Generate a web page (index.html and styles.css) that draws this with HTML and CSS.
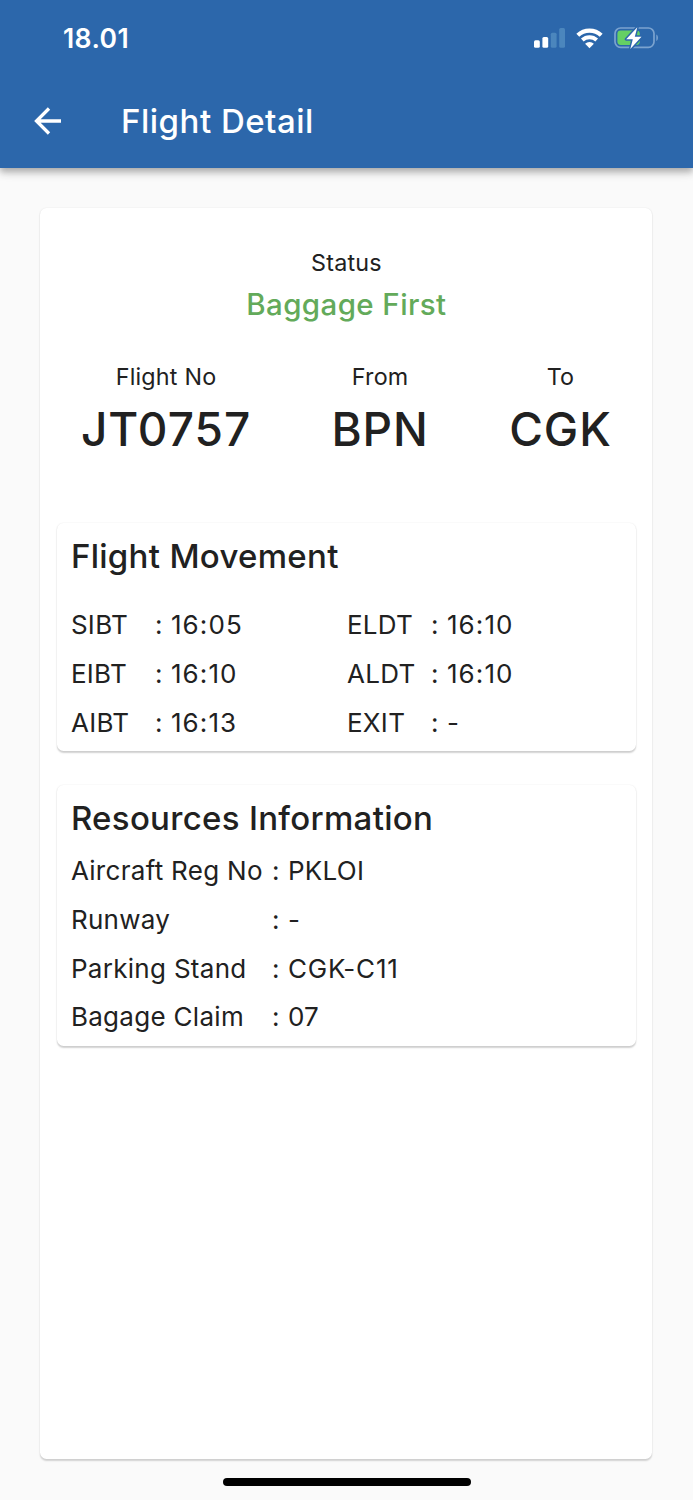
FILE: index.html
```html
<!DOCTYPE html>
<html lang="en">

<head>
    <meta charset="UTF-8">
    <meta name="viewport" content="width=device-width, initial-scale=1.0">
    <title>Flight Detail</title>
    <link rel="stylesheet" href="styles.css">
</head>

<body>
    <header>
        <div class="status-bar">
            <span class="clock">18.01</span>
            <div class="status-icons">
                <svg class="signal" width="31" height="20" viewBox="0 0 31 20" fill="#fff">
                    <rect x="0" y="12.2" width="5.8" height="7.6" rx="1.5" />
                    <rect x="8.4" y="9" width="5.8" height="10.8" rx="1.5" />
                    <rect x="16.8" y="4.7" width="5.8" height="15.1" rx="1.5" fill="#4b86bd" />
                    <rect x="25.2" y="0" width="5.8" height="19.8" rx="1.5" fill="#4b86bd" />
                </svg>
                <svg class="wifi" width="27" height="21" viewBox="0 0 27 21" fill="none" stroke="#fff">
                    <path d="M1.8 7.2a17 17 0 0 1 23.4 0" stroke-width="4.2" />
                    <path d="M6.3 12a10.6 10.6 0 0 1 14.4 0" stroke-width="3.9" />
                    <path d="M13.5 20.2l-4.4-4.4a6.3 6.3 0 0 1 8.8 0z" fill="#fff" stroke="none" />
                </svg>
                <svg class="battery" width="46" height="24" viewBox="0 0 46 24">
                    <rect x="1" y="2" width="39" height="19.4" rx="5.6" fill="none" stroke="#7ba3cf" stroke-width="1.7" />
                    <path d="M42.3 8.4c2.2.8 2.2 5.8 0 6.6z" fill="#7ba3cf" />
                    <rect x="3.4" y="4.4" width="22.4" height="14.6" rx="3.4" fill="#65d064" />
                    <path d="M23.3 1.2L12.2 13.2h6.6l-2.5 9.8 11.2-12.3h-6.7z" fill="#fff" stroke="#2c67ab" stroke-width="3" stroke-linejoin="round" paint-order="stroke" />
                </svg>
            </div>
        </div>
        <div class="app-bar">
            <svg class="back" width="28" height="28" viewBox="0 0 28 28" fill="none" stroke="#fff" stroke-width="3.3">
                <path d="M27 14H3M15 1.5L2.5 14 15 26.5" />
            </svg>
            <h1>Flight Detail</h1>
        </div>
    </header>

    <main class="card">
        <div class="status">
            <p class="label">Status</p>
            <p class="status-value">Baggage First</p>
        </div>

        <div class="route">
            <div>
                <p class="label">Flight No</p>
                <p class="code">JT0757</p>
            </div>
            <div>
                <p class="label">From</p>
                <p class="code">BPN</p>
            </div>
            <div>
                <p class="label">To</p>
                <p class="code">CGK</p>
            </div>
        </div>

        <section class="panel movement">
            <h2>Flight Movement</h2>
            <div class="rows">
                <span>SIBT</span><span>:</span><span class="time">16:05</span>
                <span>ELDT</span><span>:</span><span class="time">16:10</span>
                <span>EIBT</span><span>:</span><span class="time">16:10</span>
                <span>ALDT</span><span>:</span><span class="time">16:10</span>
                <span>AIBT</span><span>:</span><span class="time">16:13</span>
                <span>EXIT</span><span>:</span><span class="time">-</span>
            </div>
        </section>

        <section class="panel resources">
            <h2>Resources Information</h2>
            <div class="rows">
                <span>Aircraft Reg No</span><span>:</span><span>PKLOI</span>
                <span>Runway</span><span>:</span><span>-</span>
                <span>Parking Stand</span><span>:</span><span class="stand">CGK-C11</span>
                <span>Bagage Claim</span><span>:</span><span>07</span>
            </div>
        </section>
    </main>

    <div class="home-indicator"></div>
</body>

</html>
```

FILE: styles.css
```css
* {
    box-sizing: border-box;
}

body {
    background-color: #fafafa;
    color: #212121;
    font-family: Inter, "Liberation Sans", sans-serif;
    margin: 0;
    height: 1500px;
    display: flex;
    flex-direction: column;
}

h1,
h2,
p {
    margin: 0;
    font-weight: 500;
    white-space: nowrap;
}

header {
    background-color: #2c67ab;
    color: #fff;
    height: 167.5px;
    flex: none;
    box-shadow: 0 3px 6px rgba(0, 0, 0, 0.2), 0 6px 8px rgba(0, 0, 0, 0.12), 0 1px 14px rgba(0, 0, 0, 0.07);
}

.status-bar {
    display: flex;
    justify-content: space-between;
    align-items: center;
    height: 76px;
    padding: 0 33.5px 0 63px;
}

.clock {
    font-size: 26.5px;
    font-weight: 600;
    letter-spacing: 0.4px;
}

.status-icons {
    display: flex;
    align-items: center;
}

.wifi {
    margin: 0 11px 0 11px;
}

.app-bar {
    display: flex;
    align-items: center;
    height: 89px;
    padding-left: 34px;
    gap: 59px;
}

h1 {
    font-size: 33px;
    letter-spacing: 0.5px;
}

.card {
    background-color: #fff;
    border-radius: 6.5px;
    box-shadow: 0 1.6px 1.6px rgba(0, 0, 0, 0.16), 0 0 2px rgba(0, 0, 0, 0.07);
    width: 612px;
    height: 1251px;
    flex: none;
    margin: 40.5px 0 0 40.4px;
    padding: 34.8px 16.5px 0;
}

.status {
    text-align: center;
}

.label {
    font-size: 23.3px;
    font-weight: 400;
    line-height: 40px;
    letter-spacing: 0.2px;
}

.status-value {
    color: #63aa5a;
    font-size: 29.5px;
    line-height: 42px;
    letter-spacing: 0.4px;
}

.route {
    display: flex;
    justify-content: space-between;
    text-align: center;
    margin-top: 32px;
    padding: 0 24px;
}

.code {
    font-size: 46px;
    font-weight: 450;
    line-height: 64px;
    letter-spacing: 1px;
}

.panel {
    border-radius: 6.5px;
    box-shadow: 0 1.6px 1.6px rgba(0, 0, 0, 0.18), 0 0 2px rgba(0, 0, 0, 0.07);
    padding: 9px 14px 0;
}

.movement {
    height: 228.5px;
    margin-top: 62.2px;
}

.resources {
    height: 261px;
    margin-top: 33.4px;
}

h2 {
    font-size: 33px;
    line-height: 48px;
    letter-spacing: 0.3px;
}

.rows {
    display: grid;
    font-size: 26px;
    line-height: 48.6px;
    letter-spacing: 0.3px;
    white-space: nowrap;
}

.movement .rows {
    grid-template-columns: 84px 16px 176px 84px 16px 1fr;
    margin-top: 21.5px;
}

.resources .rows {
    grid-template-columns: 201px 16px 1fr;
    margin-top: 5.5px;
}

.time {
    letter-spacing: 1.1px;
}

.stand {
    letter-spacing: 0.8px;
}

.home-indicator {
    background-color: #000;
    border-radius: 4px;
    width: 248px;
    height: 8px;
    margin: 19px auto 0;
}
```
